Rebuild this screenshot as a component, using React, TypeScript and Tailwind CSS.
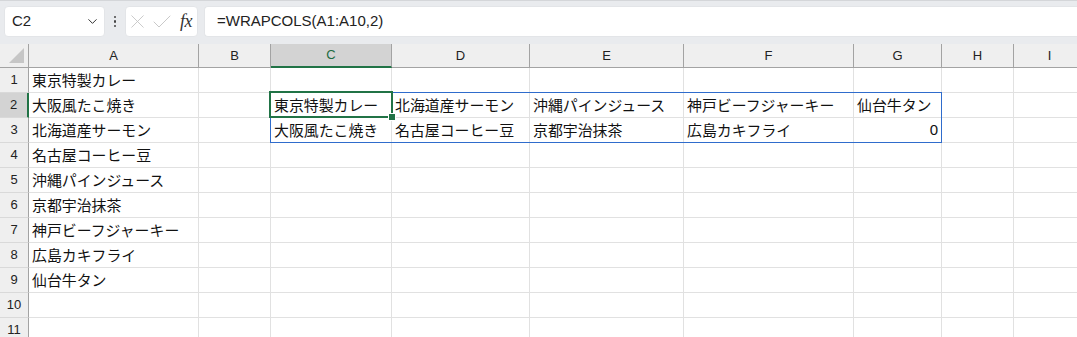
import { ChevronDown, X, Check } from "lucide-react";

const cols = ["A", "B", "C", "D", "E", "F", "G", "H", "I"];

const colA = [
    "東京特製カレー",
    "大阪風たこ焼き",
    "北海道産サーモン",
    "名古屋コーヒー豆",
    "沖縄パインジュース",
    "京都宇治抹茶",
    "神戸ビーフジャーキー",
    "広島カキフライ",
    "仙台牛タン",
];

// WRAPCOLS(A1:A10,2) spills into C2:G3
const spill: Record<string, string> = {
    C2: "東京特製カレー", C3: "大阪風たこ焼き",
    D2: "北海道産サーモン", D3: "名古屋コーヒー豆",
    E2: "沖縄パインジュース", E3: "京都宇治抹茶",
    F2: "神戸ビーフジャーキー", F3: "広島カキフライ",
    G2: "仙台牛タン", G3: "0",
};

const cellValue = (col: string, row: number): string => {
    if (col == "A") return colA[row - 1] ?? "";
    return spill[col + row] ?? "";
};

const jp = "font-['Noto_Sans_CJK_JP','Noto_Sans',sans-serif]";
const ui = "font-['Liberation_Sans',Arial,sans-serif]";

const App = () => {
    const rows = Array.from({ length: 11 }, (_, i) => i + 1);

    return (
        <div className="w-[1077px] h-[337px] overflow-hidden bg-white text-[#000]">
            {/* formula bar */}
            <div className={"h-[44px] bg-[#e9ebee] border-t border-[#d4d6d9] flex items-start pt-[5px] pl-[4px] " + ui}>
                <div className="w-[101px] h-[31px] bg-white rounded-[4px] border border-[#e3e5e8] flex items-center justify-between pl-[7px] pr-[4px]">
                    <span className="text-[15px] text-[#222]">C2</span>
                    <ChevronDown size={15} strokeWidth={1.6} className="text-[#333]" />
                </div>
                <div className="w-[20px] h-[31px] flex flex-col items-center justify-center gap-[2px]">
                    <div className="w-[2.5px] h-[2.5px] rounded-full bg-[#444]"></div>
                    <div className="w-[2.5px] h-[2.5px] rounded-full bg-[#444]"></div>
                    <div className="w-[2.5px] h-[2.5px] rounded-full bg-[#444]"></div>
                </div>
                <div className="w-[73px] h-[31px] bg-white rounded-[4px] border border-[#e3e5e8] flex items-center pl-0">
                    <X size={23} strokeWidth={0.9} className="text-[#c3c3c3]" />
                    <Check size={24} strokeWidth={0.9} className="text-[#c3c3c3] ml-[1px]" />
                    <span className="font-['Liberation_Serif',serif] italic text-[18px] text-[#333] ml-[6px] tracking-[-0.5px]">fx</span>
                </div>
                <div className="ml-[6px] flex-1 h-[31px] bg-white rounded-l-[4px] border border-r-0 border-[#e3e5e8] flex items-center pl-[12px]">
                    <span className="text-[15px] text-[#222]">=WRAPCOLS(A1:A10,2)</span>
                </div>
            </div>

            {/* sheet */}
            <div className="relative">
                <div className="grid grid-cols-[29px_170px_72px_121px_138px_154px_170px_88px_72px_72px] grid-rows-[24px_repeat(11,25px)]">
                    {/* corner */}
                    <div className="bg-[#efefef] border-r border-b border-[#a3a3a3] flex items-end justify-end pr-[4px] pb-[4px]">
                        <div className="w-0 h-0 border-l-[15px] border-l-transparent border-b-[15px] border-b-[#c6c6c6]"></div>
                    </div>
                    {cols.map((c) => (
                        <div key={c}
                            className={c == "C"
                                ? "bg-[#d3d3d3] border-r border-[#a3a3a3] border-b-2 border-b-[#217346] flex items-center justify-center text-[13px] text-[#1e6b41] " + ui
                                : "bg-[#efefef] border-r border-b border-[#a3a3a3] flex items-center justify-center text-[13px] text-[#222] " + ui}>
                            {c}
                        </div>
                    ))}

                    {rows.map((r) => (
                        <div key={"row" + r} className="contents">
                            <div className={r == 2
                                ? "bg-[#d3d3d3] border-r-2 border-r-[#217346] border-b border-b-[#d9d9d9] flex items-center justify-center text-[13px] text-[#1e1e1e] " + ui
                                : "bg-[#efefef] border-r border-r-[#a3a3a3] border-b border-b-[#d9d9d9] flex items-center justify-center text-[13px] text-[#222] " + ui}>
                                {r}
                            </div>
                            {cols.map((c) => {
                                const v = cellValue(c, r);
                                const num = v == "0";
                                return (
                                    <div key={c + r}
                                        className={"border-r border-b border-[#e1e1e1] whitespace-nowrap leading-[24px] text-[#111] " +
                                            (num ? "text-right pr-[3px] text-[15px] " + ui : "pl-[3px] text-[14.9px] " + jp)}>
                                        {v}
                                    </div>
                                );
                            })}
                        </div>
                    ))}
                </div>

                {/* spill range outline */}
                <div className="absolute left-[270px] top-[48px] w-[672px] h-[51px] border border-[#2f6ccc] pointer-events-none"></div>
                {/* active cell */}
                <div className="absolute left-[269px] top-[47px] w-[124px] h-[27px] border-2 border-[#217346] pointer-events-none"></div>
                <div className="absolute left-[388px] top-[69px] w-[8px] h-[8px] bg-[#217346] border border-white pointer-events-none"></div>
            </div>
        </div>
    );
};

export default App;
